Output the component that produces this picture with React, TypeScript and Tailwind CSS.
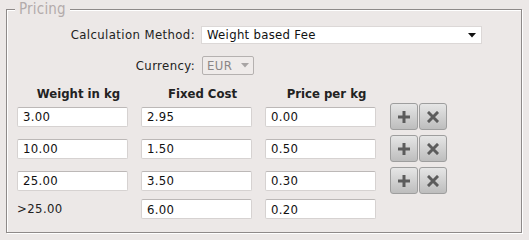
import { useState } from "react";

type Tier = { weight: string; fixed: string; perKg: string; last?: boolean };

const tiers: Tier[] = [
  { weight: "3.00", fixed: "2.95", perKg: "0.00" },
  { weight: "10.00", fixed: "1.50", perKg: "0.50" },
  { weight: "25.00", fixed: "3.50", perKg: "0.30" },
  { weight: ">25.00", fixed: "6.00", perKg: "0.20", last: true },
];

const inputCls =
  "h-[20px] w-[111px] rounded-[2px] border border-[#d6d2d1] border-t-[#bcb8b7] bg-white px-[5px] text-[13px] leading-[18px] tracking-[0.3px] text-[#111] outline-none";

function PlusIcon() {
  return (
    <svg width="12" height="12" viewBox="0 0 12 12">
      <path d="M4.5 0h3v4.5H12v3H7.5V12h-3V7.5H0v-3h4.5z" fill="#5c5c5c" />
    </svg>
  );
}

function XIcon() {
  return (
    <svg width="12" height="12" viewBox="0 0 12 12">
      <path d="M2 2L10 10M10 2L2 10" stroke="#5c5c5c" strokeWidth="3" strokeLinecap="square" />
    </svg>
  );
}

function ToolButton({ children, label }: { children: React.ReactNode; label: string }) {
  return (
    <button
      type="button"
      aria-label={label}
      className="flex h-[27px] w-[28px] items-center justify-center rounded-[3px] border border-[#9e9e9e] bg-gradient-to-b from-[#e6e6e6] to-[#bdbdbd]"
    >
      {children}
    </button>
  );
}

export default function App() {
  const [rows, setRows] = useState(tiers);

  function update(i: number, key: keyof Tier, value: string) {
    setRows((r) => r.map((t, j) => (j === i ? { ...t, [key]: value } : t)));
  }

  return (
    <div className="h-[240px] w-[529px] bg-[#ece8e7] pl-[6px] font-[family-name:'DejaVu_Sans_Condensed','DejaVu_Sans',sans-serif] text-[13px] tracking-[0.4px] text-[#222]">
      <fieldset className="h-[233px] w-[516px] border border-[#8e8a89] pt-[8px] shadow-[1px_1px_0_#fff,inset_1px_1px_0_#fff]">
        <legend className="ml-[8px] bg-[#ece8e7] px-[4px] text-[15px] leading-[18px] tracking-[0.2px] text-[#b3abab]">
          Pricing
        </legend>

        <div className="flex h-[18px] items-center">
          <span className="w-[188px] text-right">Calculation Method:</span>
          <div className="ml-[6px] flex h-[18px] w-[281px] items-center justify-between border border-[#dcd8d7] bg-white pl-[5px] pr-[5px]">
            <span className="text-[13px] tracking-[0.3px] text-[#111]">Weight based Fee</span>
            <svg width="8" height="5" viewBox="0 0 8 5">
              <path d="M0 0h8L4 4.5z" fill="#111" />
            </svg>
          </div>
        </div>

        <div className="mt-[12px] flex h-[19px] items-center">
          <span className="w-[188px] text-right">Currency:</span>
          <div className="ml-[7px] flex h-[19px] w-[52px] items-center justify-between rounded-[2px] border border-[#b5b1b0] bg-[#efebea] pl-[4px] pr-[4px]">
            <span className="text-[#8a8686]">EUR</span>
            <svg width="8" height="5" viewBox="0 0 8 5">
              <path d="M0 0h8L4 4.5z" fill="#a8a4a4" />
            </svg>
          </div>
        </div>

        <div className="mt-[11px] flex h-[16px] items-center gap-[13px] pl-[10px] font-bold leading-[16px] tracking-normal">
          <span className="w-[111px] pl-[12px] text-center">Weight in kg</span>
          <span className="w-[111px] pl-[12px] text-center">Fixed Cost</span>
          <span className="w-[111px] pl-[12px] text-center">Price per kg</span>
        </div>

        <div className="mt-[1px] flex flex-col gap-[5px] pl-[10px]">
          {rows.map((t, i) => (
            <div key={i} className="flex items-center gap-[13px]">
              {t.last ? (
                <span className="w-[111px] text-[#222]">{t.weight}</span>
              ) : (
                <input className={inputCls} value={t.weight} onChange={(e) => update(i, "weight", e.target.value)} />
              )}
              <input className={inputCls} value={t.fixed} onChange={(e) => update(i, "fixed", e.target.value)} />
              <input className={inputCls} value={t.perKg} onChange={(e) => update(i, "perKg", e.target.value)} />
              {!t.last && (
                <div className="ml-[1px] flex gap-[1px]">
                  <ToolButton label="Add">
                    <PlusIcon />
                  </ToolButton>
                  <ToolButton label="Remove">
                    <XIcon />
                  </ToolButton>
                </div>
              )}
            </div>
          ))}
        </div>
      </fieldset>
    </div>
  );
}
